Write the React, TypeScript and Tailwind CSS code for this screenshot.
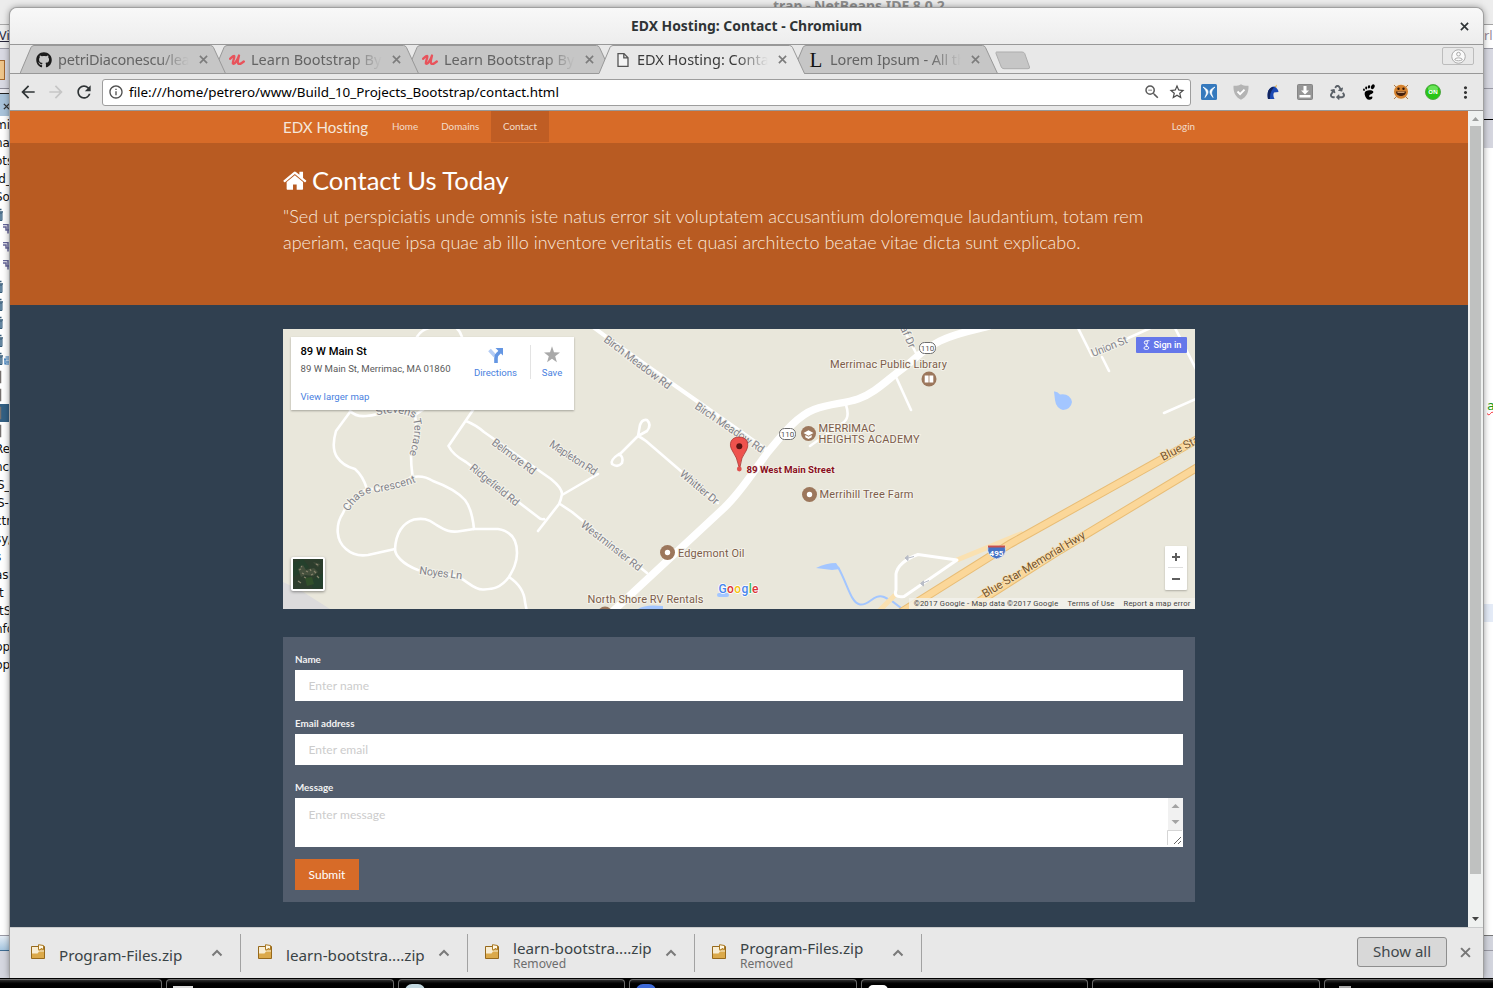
import React from "react";
import { FaGithub, FaRecycle } from "react-icons/fa";
import {
  MdArrowBack,
  MdArrowForward,
  MdRefresh,
  MdInfoOutline,
  MdZoomOut,
  MdStarBorder,
  MdMoreVert,
} from "react-icons/md";

const UI = "font-['Noto_Sans',sans-serif]";

/* ---------- desktop behind the browser window ---------- */

const treeRows: string[] = [
  "mi", "na", "ots", "ld_", "So", "#bin", "#node", "#node", "#node", "#bin", "#bin", "#bin", "#bin", "#binblue",
  "#leaf", "#leaf", "#sel", "#leaf", "Re", "nc", "S_", "S-", "ctr", "sy/", "s", "as", "t", "tS", "nfo", "pp", "bp",
];

function TreeRow({ kind }: { kind: string }) {
  if (kind[0] !== "#") {
    const shift = kind[0] === "t" ? "-ml-px" : kind === "S_" || kind === "S-" ? "-ml-[3px]" : "-ml-[5px]";
    return (
      <div className={`h-[18px] whitespace-nowrap font-['DejaVu_Sans',sans-serif] text-[12px] leading-[18px] text-[#111] ${shift}`}>
        {kind}
      </div>
    );
  }
  if (kind === "#node") {
    return (
      <svg className="block h-[18px] w-[10px]" viewBox="0 0 10 18">
        <path d="M3 .500h5v9M3 3h3v3h4" fill="none" stroke="#66669a" strokeWidth="1.500" />
      </svg>
    );
  }
  if (kind === "#leaf" || kind === "#sel") {
    return (
      <div className={kind === "#sel" ? "h-[18px] bg-[#336084]" : "h-[18px]"}>
        <svg className="block h-[18px] w-[10px]" viewBox="0 0 10 18">
          <path d="M0 3.500h.5v11H0" fill="none" stroke="#75706e" strokeWidth="1.500" />
        </svg>
      </div>
    );
  }
  return (
    <svg className="block h-[18px] w-[10px]" viewBox="0 0 10 18">
      <path d="M0 3.500h1.500M0 6h3" fill="none" stroke="#365b78" strokeWidth="1.500" />
      <path d="M0 7h2v7.500H0z" fill="#8fb0c8" stroke="#365b78" />
      {kind === "#binblue" && (
        <path d="M4 9h6M5 9v5h4M5.500 7h3.500M7 10.500v2.500M9 10.500v2.500" fill="none" stroke="#2370b8" strokeWidth="1.200" />
      )}
    </svg>
  );
}

function LeftDesktop() {
  return (
    <div className="flex w-[10px] flex-col overflow-hidden bg-white">
      <div className="h-6 shrink-0 bg-[#ececec]" />
      <div className={`h-6 shrink-0 border-t border-[#a9a9a9] bg-[#eeeeee] text-[12.500px] leading-[22px] text-[#27273c] underline ${UI}`}>
        <span className="-ml-px">Vi</span>
      </div>
      <div className="h-10 shrink-0 border-t border-[#9a9aa5] bg-[#d9dae3] pt-[11px]">
        <div className="h-5 w-[5px] border border-l-0 border-[#a5672c] bg-[#edc58b]" />
      </div>
      <div className="h-[5px] shrink-0 border-t border-[#8a8a96] bg-[#e8e8ee]" />
      <div className="h-[23px] shrink-0 border-t border-[#222] bg-[#a9c3da] pl-[3px] pt-[9px]">
        <svg className="block size-[7px]" viewBox="0 0 8 8">
          <path d="M1 1l6 6M7 1L1 7" stroke="#333" strokeWidth="1.600" />
        </svg>
      </div>
      <div className="flex flex-1 flex-col">
        {treeRows.map((r, i) => (
          <TreeRow key={i} kind={r} />
        ))}
      </div>
      <div className="h-[43px] shrink-0 border-t border-[#9a9aa5] bg-[#d5d7e0]">
        <div className="h-[15px] border-b border-[#3f6d94] bg-gradient-to-b from-[#e6eef6] to-[#a6c6e0]" />
      </div>
    </div>
  );
}

function RightDesktop() {
  return (
    <div className="flex w-[10px] flex-col overflow-hidden bg-white">
      <div className="h-6 shrink-0 bg-[#ededed]" />
      <div className={`h-6 shrink-0 border-t border-[#a4a4a4] bg-white pl-px text-[13px] leading-[21px] text-[#9a8d9a] ${UI}`}>rl</div>
      <div className="h-10 shrink-0 border-t border-[#9a9aa5] bg-[#d8d9e2]" />
      <div className="h-[31px] shrink-0 border-t border-[#9a9aa5] bg-[#d8d9e2]" />
      <div className="h-[29px] shrink-0 border-t border-black bg-[#d5d6df]" />
      <div className="mt-[248px] h-5 shrink-0 pl-1 font-['DejaVu_Sans_Mono',monospace] text-[13px] leading-5 text-[#179a17] underline decoration-red-500 decoration-wavy decoration-1">
        a
      </div>
      <div className="mt-[188px] h-[18px] shrink-0 bg-[#e4ebf7]" />
      <div className="mt-auto h-[43px] shrink-0 border-t border-[#777] bg-[#d3d5de] pt-[14px]">
        <div className="h-px bg-[#9a9aa5]" />
      </div>
    </div>
  );
}

function Taskbar() {
  const marks = [
    "",
    "mt-[6px] h-[3px] bg-[#dcdcdc]",
    "mt-[4px] h-[14px] rounded-full bg-[#c3d8e0]",
    "mt-[4px] h-[14px] rounded-full bg-[#3e6ad8]",
    "mt-[5px] h-[10px] rounded-md bg-white",
    "",
    "ml-[8px] mt-[6px] h-[3px] !w-3 bg-[#aaa]",
  ];
  return (
    <div className="flex h-[10px] w-full gap-1 overflow-hidden bg-black pt-px">
      {marks.map((m, i) => (
        <div
          key={i}
          className={`h-[14px] shrink-0 rounded-t-[4px] border-x border-t border-[#6c6c6c] bg-gradient-to-b from-[#2f2f2f] to-black to-40% pl-[6px] ${
            i === 0 ? "w-[162px] rounded-l-none border-l-0" : "w-[227.500px]"
          }`}
        >
          <div className={`w-5 ${m}`} />
        </div>
      ))}
    </div>
  );
}

/* ---------- browser chrome ---------- */

function Udemy() {
  return (
    <svg className="size-4" viewBox="0 0 16 16">
      <path
        d="M1 6.800C2.500 5.500 3.900 4 5.200 4 6.400 4.600 3.200 9.700 3.900 11.500 5.400 13 8.500 8 10 3.500 9.400 6 8 10.500 9.300 11.700 10.800 12.500 13 11 14.800 9.500"
        fill="none"
        stroke="#e8535b"
        strokeWidth="2.300"
        strokeLinejoin="round"
        strokeLinecap="round"
      />
    </svg>
  );
}

function PageIcon() {
  return (
    <svg className="size-4" viewBox="0 0 16 16">
      <path d="M3 1.600h6l4 4.100v8.700H3zM8.800 1.800v4.100H13" fill="#f4f4f4" stroke="#555" strokeWidth="1.300" />
    </svg>
  );
}

function SmallX({ className }: { className: string }) {
  return (
    <svg className={className} viewBox="0 0 10 10">
      <path d="M1 1l8 8M9 1L1 9" stroke="currentColor" strokeWidth="1.800" fill="none" />
    </svg>
  );
}

interface TabProps {
  icon: React.ReactNode;
  title: string;
  z: string;
  active?: boolean;
  spacing?: string;
}

function Tab({ icon, title, z, active, spacing = "tracking-normal" }: TabProps) {
  return (
    <div className={`relative -mr-[13px] flex h-[29px] w-[206px] shrink-0 items-center pl-4 ${z}`}>
      <svg className="absolute inset-0 h-[29px] w-[206px]" viewBox="0 0 206 29">
        <path
          d="M0 28.500L11 2.500Q12 .5 14 .5H190.500Q192.500 .5 193.500 2.500L205.500 28.500"
          fill={active ? "#e8e8e8" : "#c6c6c6"}
          stroke="#989898"
        />
        <path d={active ? "M.5 28.500H205" : "M0 28.500H206"} stroke={active ? "#e8e8e8" : "#989898"} />
      </svg>
      <div className="relative flex items-center">
        <span className="flex size-4 items-center justify-center">{icon}</span>
        <span
          className={`-mt-[2px] ml-[6px] w-[131px] overflow-hidden whitespace-nowrap text-[14.500px] leading-5 [mask-image:linear-gradient(to_right,black_76%,transparent_100%)] ${
            active ? "text-[#3b3b3b]" : "text-[#636363]"
          } ${spacing} ${UI}`}
        >
          {title}
        </span>
        <SmallX className="ml-[9.500px] size-[9px] text-[#7c7c7c]" />
      </div>
    </div>
  );
}

function TabStrip() {
  return (
    <div className="relative flex h-[29px] bg-[#e8e8e8] pl-[10px]">
      <div className="absolute inset-x-0 bottom-0 h-px bg-[#989898]" />
      <Tab
        z="z-40"
        spacing="tracking-[-0.220px]"
        icon={<FaGithub className="size-4 text-[#1b1b1b]" />}
        title="petriDiaconescu/lea"
      />
      <Tab z="z-30" icon={<Udemy />} title="Learn Bootstrap By" />
      <Tab z="z-20" icon={<Udemy />} title="Learn Bootstrap By" />
      <Tab z="z-50" active icon={<PageIcon />} title="EDX Hosting: Conta" />
      <Tab
        z="z-10"
        spacing="tracking-[-0.100px]"
        icon={<span className="font-['Liberation_Serif',serif] text-[21px] leading-4 text-[#111]">L</span>}
        title="Lorem Ipsum - All th"
      />
      <svg className="ml-[10px] mt-[6px] h-[19px] w-[36px]" viewBox="0 0 36 19">
        <path d="M1.500 1H27Q29 1 29.700 2.500L34.500 16Q35 17.700 33 17.700H9Q7 17.700 6.300 16L1 2.500Q.7 1 1.500 1Z" fill="#c6c6c6" stroke="#adadad" />
      </svg>
      <div className="ml-auto mr-[9px] mt-[2px] flex h-[18px] w-8 items-center justify-center rounded-[2px] border border-[#bcbcbc]">
        <svg className="size-[15px]" viewBox="0 0 16 16">
          <circle cx="8" cy="8" r="7.200" fill="#fafafa" stroke="#a5a5a5" />
          <circle cx="8" cy="5.500" r="2" fill="none" stroke="#a5a5a5" />
          <path d="M4 11.500C4 8.800 12 8.800 12 11.500 10 13 6 13 4 11.500Z" fill="none" stroke="#a5a5a5" />
        </svg>
      </div>
    </div>
  );
}

function Extensions() {
  const icons = [
    <svg className="size-4" viewBox="0 0 16 16">
      <rect width="16" height="16" rx="1.500" fill="#3579bd" />
      <path d="M2 3C6.500 5 7 6.500 7 8.200S5.500 11.500 4 13.500C4.800 11 5.800 9.500 5.300 8 4.800 6 3.500 4.500 2 3Z" fill="#fff" stroke="#fff" strokeWidth=".7" />
      <path d="M14 3C9.500 5 9 6.500 9 8.200s1.500 3.300 3 5.300C11.200 11 10.200 9.500 10.700 8 11.200 6 12.500 4.500 14 3Z" fill="#fff" stroke="#fff" strokeWidth=".7" />
    </svg>,
    <svg className="size-4" viewBox="0 0 16 16">
      <path d="M8 .3c2 1.200 4.500 1.700 7.500 1.500.3 6-1.500 11-7.500 14C2 12.800.2 7.800.5 1.800 3.500 2 6 1.500 8 .3Z" fill="#b4b4b4" />
      <path d="M4.500 7.500l2.600 2.600 4.400-4.400" fill="none" stroke="#fff" strokeWidth="1.900" />
    </svg>,
    <svg className="size-4" viewBox="0 0 16 16">
      <path d="M3 15Q1.500 7 5.500 4 8 2 10.500 2.700L13 6 13.500 8 11 8.300 9 8.500Q7.500 11 9.500 15Z" fill="#1b49b4" />
      <path d="M3 15Q1.500 7 5.500 4 8 2.500 9 3.500 4.500 8 5 15Z" fill="#12245f" />
      <path d="M9.500 2.700L12 .5 11.200 3.700Z" fill="#e3b34a" />
    </svg>,
    <svg className="size-4" viewBox="0 0 16 16">
      <rect x=".5" y=".5" width="15" height="15" rx="1" fill="#969696" stroke="#858585" />
      <path d="M6.500 2h3v4.500H12L8 10.500 4 6.500h2.500zM2.500 11h11v2.500h-11z" fill="#fff" />
    </svg>,
    <FaRecycle className="size-[15px] text-[#5b6168]" />,
    <svg className="size-4" viewBox="0 0 16 16">
      <ellipse cx="11.800" cy="2.800" rx="1.700" ry="2.500" transform="rotate(25 11.800 2.800)" />
      <ellipse cx="8" cy="2.900" rx="1.200" ry="1.700" transform="rotate(10 8 2.900)" />
      <ellipse cx="5.200" cy="4" rx="1" ry="1.400" />
      <ellipse cx="3" cy="5.700" rx=".9" ry="1.200" transform="rotate(-15 3 5.700)" />
      <path d="M8 6.200C4.500 6.500 3.300 8 3.700 10.500c.5 3 2.300 5.300 4.600 5.300 2 0 3.400-1.500 3.100-2.800-.4-1.200-1.800 0-2.600 0-1.100-.2-.8-1.700.4-2.400 1.900-1 3.400-1.500 3.100-2.900-.3-1.200-2-1.700-4.300-1.500Z" />
    </svg>,
    <svg className="size-4" viewBox="0 0 16 16">
      <rect width="16" height="16" fill="#eee7dc" />
      <path d="M1 1l14 14M15 1L1 15" stroke="#a07a5a" strokeWidth="1" />
      <circle cx="8" cy="7.700" r="7" fill="#d4812d" />
      <circle cx="5.500" cy="4.700" r="1.200" fill="#33170a" />
      <circle cx="10.500" cy="4.700" r="1.200" fill="#33170a" />
      <path d="M3 7.500h10c0 6-10 6-10 0Z" fill="#44200d" />
      <path d="M4.500 8.300h7" stroke="#e9b681" />
    </svg>,
    <svg className="size-4" viewBox="0 0 16 16">
      <circle cx="8" cy="8" r="7.500" fill="#28c616" stroke="#53a748" />
      <ellipse cx="8" cy="4.500" rx="5" ry="3" fill="#6be35a" />
      <text x="8" y="10.300" textAnchor="middle" fontSize="6" fontWeight="700" fill="#fff" fontFamily="Noto Sans, sans-serif">ON</text>
    </svg>,
    <MdMoreVert className="size-[19px] text-[#333]" />,
  ];
  return (
    <div className="flex">
      {icons.map((icon, i) => (
        <div key={i} className="flex w-8 items-center justify-center">{icon}</div>
      ))}
    </div>
  );
}

function Toolbar() {
  return (
    <div className="flex h-[37px] items-center border-b border-[#989898] bg-[#e8e8e8] pl-[8px]">
      <MdArrowBack className="size-5 text-[#2f3436]" />
      <MdArrowForward className="ml-2 size-5 text-[#c6c6c6]" />
      <MdRefresh className="ml-2 size-5 text-[#2f3436]" />
      <div className="ml-2 flex h-[27px] w-[1089px] items-center rounded-[3px] border border-[#9d9d9d] bg-white pl-[5px] pr-[4px]">
        <MdInfoOutline className="size-4 text-[#4f4f4f]" />
        <span className={`ml-[5px] whitespace-nowrap text-[13.430px] leading-5 text-black ${UI}`}>
          file:///home/petrero/www/Build_10_Projects_Bootstrap/contact.html
        </span>
        <MdZoomOut className="ml-auto size-[18px] text-[#5a5a5a]" />
        <MdStarBorder className="ml-[7px] size-[18px] text-[#4a4a4a]" />
      </div>
      <div className="ml-[2px]">
        <Extensions />
      </div>
    </div>
  );
}

/* ---------- web page ---------- */

function Street({ x, y, w, r, children }: { x: number; y: number; w: number; r: number; children: string }) {
  return (
    <text
      x={x}
      y={y}
      textLength={w}
      transform={`rotate(${r} ${x} ${y})`}
      fontSize="11"
      fill="#83838a"
      stroke="#f3f2ea"
      strokeWidth="2"
      paintOrder="stroke"
    >
      {children}
    </text>
  );
}

function Place({ x, y, w, children }: { x: number; y: number; w: number; children: string }) {
  return (
    <text x={x} y={y} textLength={w} fontSize="11" fill="#7d5d4a" stroke="#f3f2ea" strokeWidth="2" paintOrder="stroke">
      {children}
    </text>
  );
}

function Route110({ x, y }: { x: number; y: number }) {
  return (
    <g>
      <rect x={x - 8} y={y - 5.500} width="16" height="11" rx="5" fill="#fff" stroke="#6d6d6d" />
      <text x={x} y={y + 3} textAnchor="middle" fontSize="8" fill="#555">110</text>
    </g>
  );
}

function MapDrawing() {
  return (
    <svg className="absolute inset-0 h-[280px] w-[912px]" viewBox="283 329 912 280" fontFamily="Roboto, sans-serif">
      <rect x="283" y="329" width="912" height="280" fill="#e9e7db" />
      <path d="M283 582L300 590 330 609H283Z" fill="#dcdbdc" />
      <g fill="#a3c6ff">
        <path d="M1054 391.500Q1057 391 1060 394.500 1070 393 1072 402 1071 409 1063 410 1056 408 1055 400Z" />
        <path d="M816 568Q826 563 836 563L840 569 832 570Z" />
        <path d="M638 609Q645 604 663 606V609Z" />
        <rect x="717" y="593" width="12" height="4" rx="2" />
      </g>
      <path d="M838 567C848 585 851 603 860 604.500S874 593 884 597 896 604 902 609" fill="none" stroke="#a3c6ff" strokeWidth="2" />
      <g fill="none" stroke="#fff" strokeWidth="2.600" strokeLinecap="round" strokeLinejoin="round">
        <path d="M417 337Q421 330 429 328M455 327Q460 330 462 337" />
        <path d="M350 412L336 431Q331 448 337 457T355 469Q363 476 367 489Q350 497 343 513C335 525 336 541 346 549Q355 557 368 555L395 549" />
        <path d="M350 411Q356 417 366 416Q378 415 386 411Q405 411 415 415Q419 440 411 455Q411 465 412.500 476Q395 490 367 489M415 415L424 409" />
        <path d="M412.500 477Q424 475 433 481 455 489 465 500 472 509 474 529" />
        <path d="M395 549C396 533 403 523 414 519.500 423 518 428 519 435 524 445 530 449 533 461 531L474 529 498 529C510 531 517 539 517 553 517 563 513 570 509 577 500 589 492 589 483 589.500 472 590 465 577 452 575L418 570C402 564 395 555 395 549M509 577Q524 587 525 602L527 612" />
        <path d="M473 410L448.500 446Q453 455 466 462L538 517Q541 520 544 519M466 421Q476 425 484 432L551 479Q562 488 562 494 561 500 559 504L538 531M562 495L598 474M560 504L572 512 647 573" />
        <path d="M619 455L638 436Q642 438 646 441L718 503M638 436L640 425Q642 419 647 420 652 425 647 431L638 436M619 454Q610 460 612 464 618 468 622 463 624 457 619 454" />
        <path d="M593 327L616 344 768 451" strokeWidth="4" />
        <path d="M916 353L903 328M896 377L911 410M846 405Q850 417 844 422L810 446" />
        <path d="M1078 328L1092 356M1095 353L1155 326M1102 357L1109 371M1175 328L1198 373M1164 413L1196 399" />
      </g>
      <path
        d="M612 612L724 508C741 492 753 472 768 452 783 434 797 416 814 409.500S843 404 858 399C875 393 887 380 902 369S920 351 940 341C959 332 975 330 990 326"
        fill="none"
        stroke="#fff"
        strokeWidth="7.500"
      />
      <path d="M957 560L1023 533" stroke="#fae1b1" strokeWidth="5" />
      <path d="M878 612L895 595" stroke="#fae1b1" strokeWidth="5" />
      <path d="M957 560L918 554.500Q898 562 896 574L896 590Q893 598 904 596.500Z" fill="none" stroke="#fff" strokeWidth="3" strokeLinejoin="round" />
      <g stroke="#e8bd76" strokeWidth="8.500" fill="none">
        <path d="M892 618L1010 544 1198 439M950 620L1060 550 1198 467" />
      </g>
      <g stroke="#fbd799" strokeWidth="6.500" fill="none">
        <path d="M892 618L1010 544 1198 439M950 620L1060 550 1198 467" />
      </g>
      <path d="M905 558l3-2.500v5zM908 558l6-1.500M920.500 583.500l3-2.500v5zM923 583l6-2.500" fill="#b8bcc6" stroke="#b8bcc6" />

      <Street x={603} y={341} w={81} r={37}>Birch Meadow Rd</Street>
      <Street x={694} y={408} w={81} r={34}>Birch Meadow Rd</Street>
      <Street x={491} y={444} w={52} r={37}>Belmore Rd</Street>
      <Street x={469} y={469} w={60} r={39}>Ridgefield Rd</Street>
      <Street x={548.500} y={446} w={54.500} r={33}>Mapleton Rd</Street>
      <Street x={679} y={475} w={47} r={40}>Whittier Dr</Street>
      <Street x={580} y={526} w={74} r={38}>Westminster Rd</Street>
      <Street x={419} y={574} w={43} r={7}>Noyes Ln</Street>
      <Street x={1093} y={357} w={38} r={-22}>Union St</Street>
      <Street x={900} y={328} w={23} r={66}>af Dr</Street>
      <defs>
        <path id="chase" d="M348.500 512Q356 499 367 493.500 390 492 422 480" />
        <path id="stevens" d="M377 416Q396 408 420 421" />
        <path id="terrace" d="M413 419Q417 434 408 458" />
      </defs>
      <g fontSize="11" fill="#83838a" stroke="#f3f2ea" strokeWidth="2" paintOrder="stroke">
        <text><textPath href="#chase">Chase Crescent</textPath></text>
        <text><textPath href="#stevens">Stevens</textPath></text>
        <text><textPath href="#terrace">Terrace</textPath></text>
      </g>

      <Place x={830} y={367.500} w={117}>Merrimac Public Library</Place>
      <Place x={818.500} y={431.500} w={57}>MERRIMAC</Place>
      <Place x={818.500} y={442.500} w={101}>HEIGHTS ACADEMY</Place>
      <Place x={819.500} y={498} w={94}>Merrihill Tree Farm</Place>
      <Place x={678} y={557} w={66.500}>Edgemont Oil</Place>
      <Place x={587.500} y={603} w={116}>North Shore RV Rentals</Place>
      <g fill="#9c775c">
        <circle cx="929" cy="379" r="7.500" />
        <circle cx="808.500" cy="433.500" r="7.500" />
        <circle cx="809.500" cy="494.500" r="7.500" />
        <circle cx="667.500" cy="552.500" r="7.500" />
        <circle cx="605" cy="614" r="7.500" />
      </g>
      <g fill="#fff">
        <circle cx="809.500" cy="494.500" r="2.700" />
        <circle cx="667.500" cy="552.500" r="2.700" />
        <path d="M924.700 375.500h3.900v7h-3.900zM929.400 375.500h3.900v7h-3.900z" />
        <path d="M803.500 433l5-2.700 5 2.700-5 2.700zM805.300 435l3.200 1.700 3.200-1.700v2.200l-3.200 1.700-3.200-1.700z" />
      </g>
      <Route110 x={927.500} y={348} />
      <Route110 x={787.500} y={434} />

      <g fontSize="11.500" fill="#75552d" stroke="#fbe3b8" strokeWidth="1.500" paintOrder="stroke">
        <text x="985" y="598" textLength="118" transform="rotate(-31 985 598)">Blue Star Memorial Hwy</text>
        <text x="1163" y="461" transform="rotate(-27 1163 461)">Blue Star</text>
      </g>
      <path d="M988 546H1005Q1008 556 996.500 559 986 556 988 546Z" fill="#4572c4" stroke="#fff" strokeWidth=".6" />
      <path d="M988 545.500h17v2h-17z" fill="#c8504c" />
      <text x="996.500" y="556" textAnchor="middle" fontSize="8" fontWeight="700" fill="#fff">495</text>

      <path d="M739 467Q737 457 732.500 451C728 444 731 437 739 437S750 444 746 451Q741 457 740 467Z" fill="#ee524d" stroke="#a8312e" strokeWidth=".8" />
      <circle cx="739.300" cy="446.200" r="3" fill="#591312" />
      <circle cx="739.300" cy="469" r="2.400" fill="#e0504d" />
      <text x="746.500" y="472.500" textLength="88" fontSize="9.800" fontWeight="700" fill="#870f22" stroke="#f6efe6" strokeWidth="1.500" paintOrder="stroke">
        89 West Main Street
      </text>

      <text x="718.500" y="592.500" textLength="40" fontSize="12" fontWeight="500" stroke="#fff" strokeWidth="1.500" paintOrder="stroke">
        <tspan fill="#4885ed">G</tspan>
        <tspan fill="#db3236">o</tspan>
        <tspan fill="#f4c20d">o</tspan>
        <tspan fill="#4885ed">g</tspan>
        <tspan fill="#3cba54">l</tspan>
        <tspan fill="#db3236">e</tspan>
      </text>
    </svg>
  );
}

function MapPanel() {
  return (
    <div className="relative h-[280px] overflow-hidden font-['Roboto',sans-serif]">
      <MapDrawing />
      <div className="absolute left-2 top-2 flex h-[73px] w-[283px] bg-white pl-[9.500px] shadow-[0_1px_2px_rgba(0,0,0,0.3)]">
        <div className="flex w-[173px] flex-col whitespace-nowrap pt-[7px]">
          <div className="text-[11.200px] font-medium leading-[15px] text-black">89 W Main St</div>
          <div className="mt-[3px] text-[9.600px] leading-[14px] text-[#5b5b5b]">89 W Main St, Merrimac, MA 01860</div>
          <div className="mt-[14px] text-[9.600px] leading-[14px] text-[#4a7fe0]">View larger map</div>
        </div>
        <div className="mt-2 flex w-[44px] flex-col items-center">
          <svg className="size-5" viewBox="0 0 20 20">
            <path d="M3.500 5L9 11" stroke="#b5cdf5" strokeWidth="3.600" />
            <path d="M10 18V13Q10 10.500 12 8.700L14 6.700" fill="none" stroke="#6496e3" strokeWidth="3.600" />
            <path d="M9.500 3H17V10.500Z" fill="#6496e3" />
          </svg>
          <div className="mt-px text-[9.600px] leading-[14px] text-[#4a7fe0]">Directions</div>
        </div>
        <div className="ml-[12px] mt-2 h-[34px] w-px bg-[#e3e3e3]" />
        <div className="mt-2 flex w-[43px] flex-col items-center">
          <svg className="h-5 w-4" viewBox="0 0 16 20">
            <path d="M8 1.300L10 7.300 16 7.400 11.200 11.200 12.900 17.200 8 13.700 3.100 17.200 4.800 11.200 0 7.400 6 7.300Z" fill="#a9a9a9" />
          </svg>
          <div className="mt-px text-[9.600px] leading-[14px] text-[#4a7fe0]">Save</div>
        </div>
      </div>
      <div className="absolute right-2 top-2 flex h-4 w-[51px] items-center gap-1 rounded-[1px] bg-[#6577ea] pl-[6.500px] text-[9.200px] font-medium text-white">
        <svg className="h-[10px] w-[7px]" viewBox="0 0 7 10">
          <circle cx="3" cy="2.500" r="1.700" fill="none" stroke="#fff" />
          <path d="M6.500 .7H3.500M4 4.200L3 5.300 5.500 7Q6.500 9.300 3.300 9.500 0 9.200 1 7.500 2 6.200 4.500 6.500" fill="none" stroke="#fff" strokeWidth=".9" />
        </svg>
        <span className="whitespace-nowrap">Sign in</span>
      </div>
      <div className="absolute left-2 top-[228px] size-[34px] rounded-[2px] border-2 border-white bg-[#2c3d2c] shadow-[0_1px_3px_rgba(0,0,0,0.4)]">
        <svg className="size-full" viewBox="0 0 30 30">
          <path d="M0 4L10 0 16 8 8 14 0 18ZM18 22L30 14V28L20 30Z" fill="#24402c" />
          <path d="M12 19L19 18 21 25 14 27Z" fill="#31502a" />
          <path d="M5 10L10 6 13 11 21 9 25 13 20 17 12 16 8 18ZM20 3L27 5 25 8Z" fill="#45503d" />
          <path
            d="M6 11l2-1M9 14l2 1M13 12l2 1M17 10l1 2M21 12l2 2M11 18l2 1M5 22l3 2M18 16l2-1M8 8l1-1M23 5l2 1M24 17l2 2"
            stroke="#87836c"
            strokeWidth="1.200"
          />
        </svg>
      </div>
      <div className="absolute right-2 top-[217px] flex h-11 w-[22px] flex-col items-center rounded-[1px] bg-white shadow-[0_1px_2px_rgba(0,0,0,0.25)]">
        <svg className="h-11 w-[22px]" viewBox="0 0 22 44">
          <path d="M7 11h8M11 7v8M7 33h8" stroke="#5e5e5e" strokeWidth="2" />
          <path d="M3 21.500h15" stroke="#dedede" />
        </svg>
      </div>
      <div className="absolute bottom-0 right-0 flex h-[11px] items-center gap-[9px] bg-[#f3f2ec]/80 px-[4.500px] text-[7.600px] leading-[11px] text-[#444]">
        <span className="whitespace-nowrap tracking-[0.200px]">©2017 Google - Map data ©2017 Google</span>
        <span className="whitespace-nowrap tracking-[0.180px]">Terms of Use</span>
        <span className="whitespace-nowrap tracking-[0.200px]">Report a map error</span>
      </div>
    </div>
  );
}

function FieldLabel({ children }: { children: string }) {
  return <span className="block h-[17px] text-[9.800px] font-bold leading-[12px] text-[#f1f1f1]">{children}</span>;
}

function Field({ label, placeholder }: { label: string; placeholder: string }) {
  return (
    <label className="mb-4 block">
      <FieldLabel>{label}</FieldLabel>
      <input
        className="block h-[31px] w-full bg-white px-[13.500px] text-[12px] tracking-[0.050px] placeholder:text-[#cccccc] placeholder:opacity-100"
        placeholder={placeholder}
      />
    </label>
  );
}

function WebPage() {
  return (
    <div className="h-[816px] w-[1458px] overflow-hidden bg-[#304050] font-['Lato',sans-serif] [font-variant-ligatures:none]">
      <nav className="h-8 bg-[#d76b28]">
        <div className="mx-[273px] flex h-[31px] w-[912px] items-center whitespace-nowrap text-[9.850px] text-[#f3dccb]">
          <span className="w-[97.500px] pt-[2px] text-[15.100px] text-[#f5e6da]">EDX Hosting</span>
          <span className="flex h-full w-[49px] items-center justify-center">Home</span>
          <span className="flex h-full w-[61.500px] items-center justify-center">Domains</span>
          <span className="flex h-full w-[58px] items-center justify-center bg-[#bf5d24]">Contact</span>
          <span className="ml-auto">Login</span>
        </div>
      </nav>
      <header className="h-[162px] bg-[#b85b22] px-[273px] pt-[21px]">
        <h1 className="flex items-center whitespace-nowrap text-[25.600px] leading-8 text-white">
          <svg className="mr-[3.500px] mt-[2px] size-[25.500px] shrink-0" viewBox="0 0 1792 1792" fill="currentColor">
            <path d="M1408 992v480q0 26-19 45t-45 19h-384v-384h-256v384h-384q-26 0-45-19t-19-45v-480q0-1 .5-3t.5-3l575-474 575 474q1 2 1 6zm223-69l-62 74q-8 9-21 11h-3q-13 0-21-7l-692-577-692 577q-12 8-24 7-13-2-21-11l-62-74q-8-10-7-23.500t11-21.500l719-599q32-26 76-26t76 26l244 204v-195q0-14 9-23t23-9h192q14 0 23 9t9 23v408l219 182q10 8 11 21.500t-7 23.500z" />
          </svg>
          Contact Us Today
        </h1>
        <p className="mt-[7px] whitespace-nowrap text-[18px] font-light leading-[26px] text-[#f8e9de]">
          <span className="tracking-[0.038px]">
            "Sed ut perspiciatis unde omnis iste natus error sit voluptatem accusantium doloremque laudantium, totam rem
          </span>
          <br />
          <span className="tracking-[-0.010px]">
            aperiam, eaque ipsa quae ab illo inventore veritatis et quasi architecto beatae vitae dicta sunt explicabo.
          </span>
        </p>
      </header>
      <main className="mx-[273px] w-[912px] pt-6">
        <MapPanel />
        <form className="mt-7 h-[265px] bg-[#525d6d] px-3 pt-4">
          <Field label="Name" placeholder="Enter name" />
          <Field label="Email address" placeholder="Enter email" />
          <label className="block">
            <FieldLabel>Message</FieldLabel>
            <div className="flex h-[49px] bg-white">
              <textarea
                className="block h-full flex-1 resize-none overflow-hidden px-[13.500px] pt-2 text-[12px] leading-[18px] tracking-[0.050px] placeholder:text-[#cccccc] placeholder:opacity-100"
                placeholder="Enter message"
              />
              <svg className="h-[49px] w-4" viewBox="0 0 16 49">
                <rect x="1" width="15" height="32" fill="#f1f1f1" />
                <path d="M4.500 10h8L8.500 6ZM4.500 22h8L8.500 26Z" fill="#a3a3a3" />
                <path d="M.5 47V32.500H15" fill="none" stroke="#d5d5d5" />
                <path d="M7 46L14 39M11 46L14 43" stroke="#666" />
              </svg>
            </div>
          </label>
          <button type="button" className="mt-3 block h-[31px] w-16 bg-[#d76b28] text-[12px] text-white">
            Submit
          </button>
        </form>
      </main>
    </div>
  );
}

function Scrollbar() {
  return (
    <div className="flex w-[15px] flex-col items-center bg-[#eff1f0]">
      <svg className="h-[15px] w-[15px]" viewBox="0 0 15 15">
        <path d="M4 10h7L7.500 6Z" fill="#9d9f9e" />
      </svg>
      <div className="h-[748px] w-[11px] bg-[#bfc1c0]" />
      <svg className="mt-auto h-[15px] w-[15px]" viewBox="0 0 15 15">
        <path d="M4 5h7L7.500 9Z" fill="#444" />
      </svg>
    </div>
  );
}

/* ---------- downloads shelf ---------- */

function Download({ name, removed }: { name: string; removed?: boolean }) {
  return (
    <div className={`flex h-[38px] w-[227px] shrink-0 border-r border-[#a2a2a2] ${UI}`}>
      <svg className="ml-4 mt-[10px] size-4 shrink-0" viewBox="0 0 16 16">
        <path d="M1.500 2.500h13v12h-13z" fill="#dba94a" stroke="#96691c" />
        <path d="M2 3h6v3.500h6v1H9L7.500 9.500H2z" fill="#f8edd3" />
        <path d="M8.500 5.500V.7L13.500 1.500V5.500L11 4.500 10 6Z" fill="#fff7e3" stroke="#a97822" />
      </svg>
      <div className={`ml-[13px] w-[152px] whitespace-nowrap ${removed ? "pt-[4px]" : "pt-[11px]"}`}>
        <div className="text-[15.200px] leading-5 text-[#3a4346]">{name}</div>
        {removed && <div className="-mt-[2px] text-[12.100px] leading-4 text-[#6d6d6d]">Removed</div>}
      </div>
      <svg className="mt-[14px] h-[10px] w-3" viewBox="0 0 12 10">
        <path d="M1.500 7.500L6 3 10.500 7.500" fill="none" stroke="#7a7a7a" strokeWidth="2" />
      </svg>
    </div>
  );
}

function DownloadShelf() {
  return (
    <div className="flex h-[51px] border-t border-[#c9cbcc] bg-[#e8e8e8] pl-1 pt-[6px]">
      <Download name="Program-Files.zip" />
      <Download name="learn-bootstra....zip" />
      <Download name="learn-bootstra....zip" removed />
      <Download name="Program-Files.zip" removed />
      <button
        type="button"
        className={`ml-auto mt-[3px] h-[30px] w-[90px] rounded-[3px] border border-[#8e8e8e] bg-[#d8d8d8] pb-[2px] text-[15px] leading-5 text-[#40474a] ${UI}`}
      >
        Show all
      </button>
      <SmallX className="ml-[12.500px] mr-[12.500px] mt-[13px] size-[11px] text-[#777]" />
    </div>
  );
}

export default function App() {
  return (
    <div className="relative h-[988px] w-[1493px] overflow-hidden bg-[#ececec]">
      <div className="flex h-[978px] justify-between">
        <LeftDesktop />
        <div className={`h-2 flex-1 overflow-hidden pl-[763px] text-[14px] font-bold leading-[12px] text-[#8f8f8f] ${UI}`}>
          trap - NetBeans IDE 8.0.2
        </div>
        <RightDesktop />
      </div>
      <Taskbar />
      <section className="absolute left-[10px] top-[8px] flex w-[1473px] flex-col rounded-t-[7px] shadow-[0_0_0_1px_#a0a0a0,0_0_7px_rgba(0,0,0,0.5)] [clip-path:inset(-8px_-10px_0_-10px)]">
        <div className="flex h-[37px] items-center rounded-t-[7px] border-b border-[#989898] bg-gradient-to-b from-[#f8f8f8] to-[#ededed]">
          <div className={`flex-1 whitespace-nowrap pl-[23px] text-center text-[13.900px] font-bold text-[#2f3436] ${UI}`}>
            EDX Hosting: Contact - Chromium
          </div>
          <SmallX className="mr-[14px] size-[9px] text-[#2f3436]" />
        </div>
        <TabStrip />
        <Toolbar />
        <div className="flex h-[816px]">
          <WebPage />
          <Scrollbar />
        </div>
        <DownloadShelf />
      </section>
    </div>
  );
}
